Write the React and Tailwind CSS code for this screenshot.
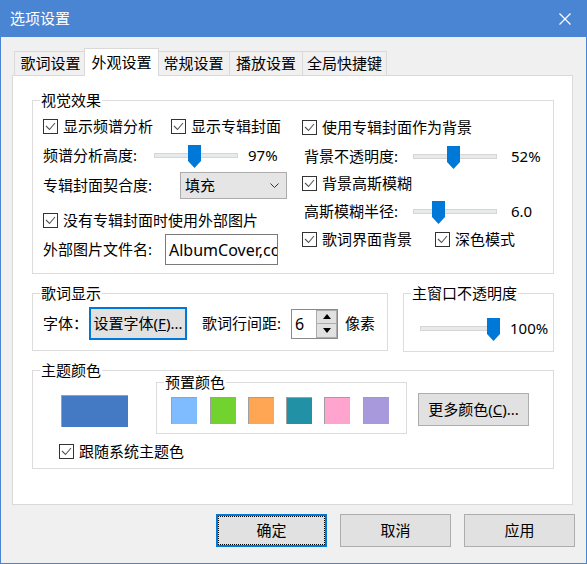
import React from 'react';

function Check({ label, className = '' }) {
  return (
    <div className={`flex h-[15px] items-center ${className}`}>
      <svg width="15" height="15" viewBox="0 0 15 15" className="shrink-0">
        <rect x="0.5" y="0.5" width="14" height="14" fill="#fff" stroke="#333" />
        <path d="M3 7 L6.5 10.5 L12 4" fill="none" stroke="#555" strokeWidth="1.1" />
      </svg>
      <span className="ml-[5px] whitespace-nowrap">{label}</span>
    </div>
  );
}

function Thumb({ className }) {
  return (
    <svg width="13" height="23" viewBox="0 0 13 23" className={`absolute top-[-9px] ${className}`}>
      <path d="M0 0 H13 V16 L6.5 23 L0 16 Z" fill="#0078d7" />
    </svg>
  );
}

function Group({ label, className = '', children }) {
  return (
    <div className={`relative border border-[#dcdcdc] ${className}`}>
      <span className="absolute left-[7px] top-[-11px] bg-white px-[1px] leading-[20px] whitespace-nowrap">{label}</span>
      {children}
    </div>
  );
}

function Tab({ label, className = '' }) {
  return (
    <div className={`flex h-[24px] items-center justify-center border-l border-t border-[#d9d9d9] bg-[#f0f0f0] whitespace-nowrap ${className}`}>
      {label}
    </div>
  );
}

function Button({ children, className = '' }) {
  return (
    <div className={`flex h-[33px] w-[111px] items-center justify-center border border-[#adadad] bg-[#e1e1e1] whitespace-nowrap ${className}`}>
      {children}
    </div>
  );
}

export default function App() {
  return (
    <div className="flex h-[564px] w-[587px] flex-col border-x border-b border-[#4a85d4] bg-[#f0f0f0] font-['Noto_Sans','Noto_Sans_CJK_SC',sans-serif] text-[15px] text-black">
      <div className="flex h-[37px] shrink-0 items-center justify-between bg-[#4a85d4] pl-[9px] pr-[15px] text-white">
        <span>选项设置</span>
        <svg width="12" height="12" viewBox="0 0 12 12">
          <path d="M0.5 0.5 L11.5 11.5 M11.5 0.5 L0.5 11.5" stroke="#fff" strokeWidth="1.2" />
        </svg>
      </div>

      <div className="flex flex-col px-[11px]">
        <div className="mt-[11px] flex h-[27px] items-end pl-[2px]">
          <Tab label="歌词设置" className="w-[72px]" />
          <div className="relative z-10 -mx-[2px] mb-[-1px] flex h-[28px] w-[75px] items-center justify-center border-x border-t border-[#d9d9d9] bg-white">
            外观设置
          </div>
          <Tab label="常规设置" className="w-[72px]" />
          <Tab label="播放设置" className="w-[73px]" />
          <Tab label="全局快捷键" className="w-[85px] border-r" />
        </div>

        <div className="h-[430px] w-[561px] border border-[#d9d9d9] bg-white pl-[19px] pt-[24px]">
          <Group label="视觉效果" className="flex h-[174px] w-[522px]">
            <div className="flex w-[269px] flex-col pl-[10px] pt-[18px]">
              <div className="flex">
                <Check label="显示频谱分析" className="w-[128px]" />
                <Check label="显示专辑封面" />
              </div>
              <div className="mt-[9px] flex h-[24px] items-center">
                <span className="w-[111px] whitespace-nowrap">频谱分析高度:</span>
                <div className="relative h-[5px] w-[84px] border border-[#d6d6d6] bg-[#e7eaea]">
                  <Thumb className="left-[33px]" />
                </div>
                <span className="ml-[10px]">97%</span>
              </div>
              <div className="mt-[5px] flex h-[27px] items-center">
                <span className="w-[137px] whitespace-nowrap">专辑封面契合度:</span>
                <div className="flex h-[27px] w-[107px] items-center justify-between border border-[#acacac] bg-[#e5e5e5] pl-[4px] pr-[7px]">
                  <span>填充</span>
                  <svg width="9" height="5" viewBox="0 0 9 5">
                    <path d="M0.5 0.5 L4.5 4.5 L8.5 0.5" fill="none" stroke="#333" strokeWidth="1" />
                  </svg>
                </div>
              </div>
              <Check label="没有专辑封面时使用外部图片" className="mt-[14px]" />
              <div className="mt-[6px] flex h-[31px] items-center">
                <span className="w-[122px] whitespace-nowrap">外部图片文件名:</span>
                <div className="flex h-[31px] w-[113px] items-center overflow-hidden border border-[#7a7a7a] bg-white pl-[3px] text-[16px] whitespace-nowrap">
                  AlbumCover,cover
                </div>
              </div>
            </div>

            <div className="flex flex-col pt-[19px]">
              <Check label="使用专辑封面作为背景" />
              <div className="mt-[9px] flex h-[24px] items-center">
                <span className="ml-[2px] w-[109px] whitespace-nowrap">背景不透明度:</span>
                <div className="relative h-[5px] w-[84px] border border-[#d6d6d6] bg-[#e7eaea]">
                  <Thumb className="left-[33px]" />
                </div>
                <span className="ml-[14px]">52%</span>
              </div>
              <Check label="背景高斯模糊" className="mt-[8px]" />
              <div className="mt-[8px] flex h-[24px] items-center">
                <span className="ml-[2px] w-[109px] whitespace-nowrap">高斯模糊半径:</span>
                <div className="relative h-[5px] w-[84px] border border-[#d6d6d6] bg-[#e7eaea]">
                  <Thumb className="left-[18px]" />
                </div>
                <span className="ml-[14px]">6.0</span>
              </div>
              <div className="mt-[9px] flex">
                <Check label="歌词界面背景" className="w-[133px]" />
                <Check label="深色模式" />
              </div>
            </div>
          </Group>

          <div className="mt-[19px] flex items-start">
            <Group label="歌词显示" className="h-[58px] w-[356px] pl-[10px] pt-[13px]">
              <div className="flex h-[33px] items-center">
                <span className="w-[46px]">字体：</span>
                <div className="flex h-[33px] w-[98px] items-center justify-center border-2 border-[#0078d7] bg-[#e1e1e1] whitespace-nowrap">
                  设置字体(<span className="underline">F</span>)...
                </div>
                <span className="ml-[15px] w-[89px] whitespace-nowrap">歌词行间距:</span>
                <div className="flex h-[30px] w-[47px] border border-[#8a8a8a] bg-white">
                  <div className="flex w-[24px] items-center pl-[3px] text-[16px]">6</div>
                  <div className="flex flex-1 flex-col">
                    <div className="flex flex-1 items-center justify-center border border-[#adadad] bg-[#e1e1e1]">
                      <svg width="8" height="5" viewBox="0 0 8 5"><path d="M0 5 L4 0 L8 5 Z" fill="#000" /></svg>
                    </div>
                    <div className="flex flex-1 items-center justify-center border border-t-0 border-[#adadad] bg-[#e1e1e1]">
                      <svg width="8" height="5" viewBox="0 0 8 5"><path d="M0 0 L8 0 L4 5 Z" fill="#000" /></svg>
                    </div>
                  </div>
                </div>
                <span className="ml-[7px]">像素</span>
              </div>
            </Group>

            <Group label="主窗口不透明度" className="ml-[15px] h-[59px] w-[151px] pl-[16px] pt-[22px]">
              <div className="flex h-[24px] items-center">
                <div className="relative h-[5px] w-[78px] border border-[#d6d6d6] bg-[#e7eaea]">
                  <Thumb className="left-[66px]" />
                </div>
                <span className="ml-[12px]">100%</span>
              </div>
            </Group>
          </div>

          <Group label="主题颜色" className="mt-[18px] h-[99px] w-[522px]">
            <div className="flex items-start pl-[28px]">
              <div className="mt-[24px] h-[32px] w-[67px] border-l border-t border-[#a0a0a0] bg-[#4479c3]" />
              <Group label="预置颜色" className="ml-[28px] mt-[11px] flex h-[52px] w-[251px] items-start pl-[14px] pt-[14px]">
                <div className="h-[27px] w-[26px] border-l border-t border-[#a0a0a0] bg-[#7fbcff]" />
                <div className="ml-[13px] h-[27px] w-[26px] border-l border-t border-[#a0a0a0] bg-[#72d22e]" />
                <div className="ml-[12px] h-[27px] w-[26px] border-l border-t border-[#a0a0a0] bg-[#ffa654]" />
                <div className="ml-[12px] h-[27px] w-[26px] border-l border-t border-[#a0a0a0] bg-[#2192a6]" />
                <div className="ml-[12px] h-[27px] w-[26px] border-l border-t border-[#a0a0a0] bg-[#ffa3cf]" />
                <div className="ml-[13px] h-[27px] w-[26px] border-l border-t border-[#a0a0a0] bg-[#a899dc]" />
              </Group>
              <Button className="ml-[11px] mt-[22px]">
                更多颜色(<span className="underline">C</span>)...
              </Button>
            </div>
            <Check label="跟随系统主题色" className="ml-[26px] mt-[10px]" />
          </Group>
        </div>

        <div className="mt-[9px] flex justify-end gap-[13px]">
          <div className="h-[33px] w-[111px] border-2 border-[#0078d7] bg-[#e1e1e1]">
            <div className="flex h-full w-full items-center justify-center border border-dotted border-black">确定</div>
          </div>
          <Button>取消</Button>
          <Button>应用</Button>
        </div>
      </div>
    </div>
  );
}
